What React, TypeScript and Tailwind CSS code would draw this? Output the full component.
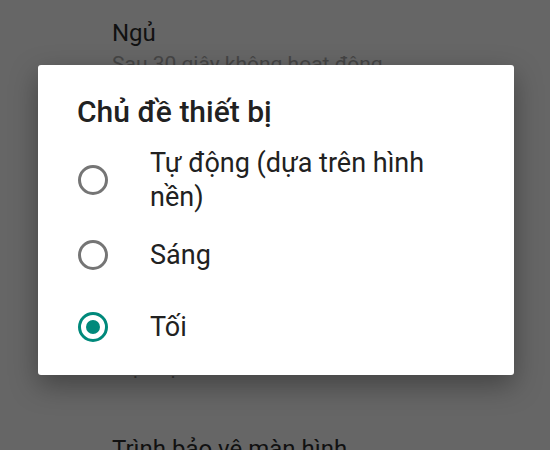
const OPTIONS = [
  { label: 'Tự động (dựa trên hình nền)', h: 'h-[78px]' },
  { label: 'Sáng', h: 'h-[72px]' },
  { label: 'Tối', h: 'h-[72px]' },
]

function Radio({ checked }: { checked: boolean }) {
  return (
    <svg width="30" height="30" viewBox="0 0 30 30" className="shrink-0">
      <circle cx="15" cy="15" r="13.5" fill="none" stroke={checked ? '#00897b' : '#757575'} strokeWidth="3" />
      {checked && <circle cx="15" cy="15" r="7" fill="#00897b" />}
    </svg>
  )
}

export default function App() {
  const selected = 2

  return (
    <div className="relative h-[450px] w-[550px] overflow-hidden bg-[#666666] font-['Roboto',sans-serif]">
      {/* settings list behind the scrim */}
      <div className="flex flex-col pl-[112px] pt-[18px]">
        <p className="text-[24px] leading-[30px] text-[#111111]">Ngủ</p>
        <p className="mt-[2px] whitespace-nowrap text-[21px] leading-[28px] text-[#454545]">Sau 30 giây không hoạt động</p>
        <p className="mt-[246px] text-[24px] leading-[30px] text-[#111111]">Chủ đề thiết bị</p>
        <p className="text-[21px] leading-[28px] text-[#3a3a3a]">Mặc định</p>
        <p className="mt-[52px] whitespace-nowrap text-[24px] leading-[30px] text-[#111111]">Trình bảo vệ màn hình</p>
      </div>

      {/* dialog */}
      <div className="absolute left-[38px] top-[65px] flex h-[310px] w-[476px] flex-col rounded-[3px] bg-white pt-[29px] shadow-[0_10px_28px_rgba(0,0,0,0.35)]">
        <h2 className="pl-[39px] text-[30px] font-medium leading-[36px] text-[#212121]">Chủ đề thiết bị</h2>
        <div className="mt-[11px] flex flex-col">
          {OPTIONS.map((opt, i) => (
            <div key={opt.label} className={`flex items-center pl-[40px] pr-[56px] ${opt.h}`}>
              <Radio checked={i === selected} />
              <span className="ml-[42px] text-[27px] leading-[34px] text-[#212121]">{opt.label}</span>
            </div>
          ))}
        </div>
      </div>
    </div>
  )
}
